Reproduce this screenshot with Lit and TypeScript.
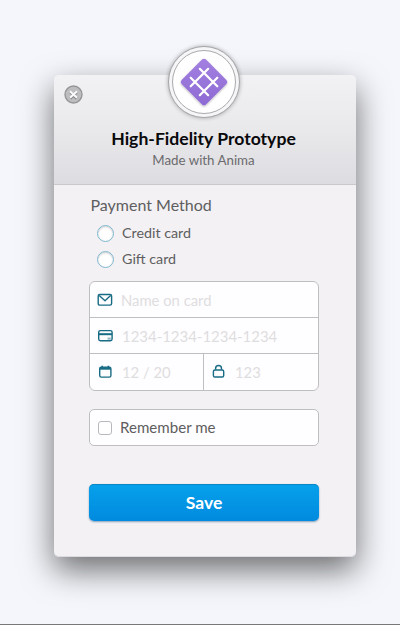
import { LitElement, html, css, svg } from 'lit';
import { customElement, property, state } from 'lit/decorators.js';
import { classMap } from 'lit/directives/class-map.js';

const icons = {
  mail: svg`
    <rect x="1.2" y="2.5" width="13.4" height="10.6" rx="1.6" />
    <path d="M2.2 3.5 8 8.7 13.6 3.5" />`,
  card: svg`
    <rect x="1.7" y="2.6" width="13.4" height="10.2" rx="1.7" />
    <path d="M1.7 6.2H15.1" stroke-width="2" />
    <path d="M10.5 10.6H13.8" stroke="#8fb4c0" stroke-width="2" />`,
  calendar: svg`
    <rect x="2.7" y="3.1" width="11.2" height="10" rx="1.6" />
    <path d="M2.8 4.4H13.8" stroke-width="2.6" />
    <path d="M5.2 1.7V4M11.4 1.7V4" stroke-width="1.6" />`,
  lock: svg`
    <rect x="2.4" y="6" width="10.3" height="7" rx="1.6" />
    <path d="M4.6 5.8V4.5a2.95 2.95 0 0 1 5.9 0V5.8" />`,
};

@customElement('field-icon')
export class FieldIcon extends LitElement {
  @property() name: keyof typeof icons = 'mail';

  static styles = css`
    :host {
      display: block;
      width: 16px;
      height: 16px;
      flex: none;
    }
    svg {
      display: block;
      fill: none;
      stroke: #176c84;
      stroke-width: 1.4;
      stroke-linejoin: round;
    }
  `;

  render() {
    return html`<svg width="16" height="16" viewBox="0 0 16 16">${icons[this.name]}</svg>`;
  }
}

@customElement('app-root')
export class AppRoot extends LitElement {
  @state() private method = '';
  @state() private remember = false;

  static styles = css`
    :host {
      display: flex;
      flex-direction: column;
      align-items: center;
      box-sizing: border-box;
      height: 625px;
      padding: 75px 0 0 10px;
      overflow: hidden;
      background: #f5f6fb;
      border-bottom: 1px solid #777;
      font-family: Lato, sans-serif;
      color: #5e5e60;
    }
    .card {
      display: flex;
      flex-direction: column;
      box-sizing: border-box;
      width: 302px;
      height: 482px;
      border-radius: 5px;
      background: #f3f1f4;
      box-shadow: 0 13px 32px rgba(0, 0, 0, 0.56), inset 0 -1px 0 #dcdbde;
    }
    .header {
      position: relative;
      box-sizing: border-box;
      height: 110px;
      padding: 53px 3px 0 0;
      border-radius: 5px 5px 0 0;
      border-bottom: 1px solid #c9c8cb;
      background: linear-gradient(#f2f1f4, #e9e8eb 50%, #dddce0);
      text-align: center;
    }
    .close {
      position: absolute;
      left: 10px;
      top: 10px;
      width: 19px;
      height: 19px;
      padding: 0;
      border: none;
      background: none;
    }
    .close svg,
    .logo svg {
      display: block;
    }
    .logo {
      position: absolute;
      left: 114px;
      top: -29px;
      box-sizing: border-box;
      width: 72px;
      height: 72px;
      padding: 3px;
      border: 1px solid #a5a5a8;
      border-radius: 50%;
      background: #f6f6f8;
      box-shadow: 0 0 4px rgba(0, 0, 0, 0.3);
    }
    .disc {
      display: flex;
      align-items: center;
      justify-content: center;
      box-sizing: border-box;
      width: 64px;
      height: 64px;
      border: 1px solid #aaaaad;
      border-radius: 50%;
      background: #fff;
    }
    .title {
      margin: 0;
      font-size: 17.6px;
      line-height: 22px;
      font-weight: 700;
      color: #09090b;
      white-space: nowrap;
    }
    .subtitle {
      font-size: 13.3px;
      line-height: 20px;
      color: #6b6b6e;
    }
    .body {
      display: flex;
      flex-direction: column;
      padding: 9px 37px 0 35px;
    }
    .heading {
      margin: 0 0 4px 1.5px;
      font-size: 16px;
      line-height: 22px;
      font-weight: 400;
    }
    .radio {
      display: flex;
      align-items: center;
      gap: 8px;
      height: 26px;
      padding-left: 8px;
      font-size: 14.3px;
      line-height: 19px;
    }
    .label {
      padding-bottom: 1px;
    }
    .ring {
      box-sizing: border-box;
      width: 17px;
      height: 17px;
      border: 1px solid #7fb6cf;
      border-radius: 50%;
      background: #fff;
      box-shadow: inset 0 1px 2px rgba(0, 0, 0, 0.2);
    }
    .ring.on {
      border-width: 5px;
    }
    .fields {
      display: grid;
      grid-template-columns: 114px 1fr;
      grid-template-rows: 36px 36px 36px;
      box-sizing: border-box;
      height: 110px;
      margin-top: 9px;
      border: 1px solid #bfbfc3;
      border-radius: 6px;
      background: #fefdff;
    }
    .field {
      display: flex;
      align-items: center;
      gap: 9px;
      box-sizing: border-box;
      min-width: 0;
      padding-left: 7px;
      border-bottom: 1px solid #bfbfc3;
    }
    .wide {
      grid-column: 1 / 3;
    }
    .name {
      gap: 8px;
    }
    .last {
      border-bottom: none;
    }
    .split {
      border-right: 1px solid #bfbfc3;
    }
    .code {
      gap: 8px;
    }
    input {
      flex: 1;
      min-width: 0;
      padding: 0;
      border: none;
      outline: none;
      background: none;
      font: 14.8px Lato, sans-serif;
      color: #58585a;
    }
    .number {
      font-size: 14.95px;
    }
    input::placeholder {
      color: #dedde0;
      opacity: 1;
    }
    .remember {
      display: flex;
      align-items: center;
      gap: 8px;
      box-sizing: border-box;
      height: 37px;
      margin-top: 18px;
      padding-left: 8px;
      border: 1px solid #bfbfc3;
      border-radius: 5px;
      background: #fefdff;
      font-size: 15.1px;
      line-height: 18px;
    }
    .box {
      box-sizing: border-box;
      width: 14px;
      height: 14px;
      border: 1px solid #b9b9bd;
      border-radius: 3px;
      background: #fff;
    }
    .box.on {
      background: #0b95e3;
    }
    .save {
      height: 37px;
      margin-top: 38px;
      padding: 0;
      border: none;
      border-radius: 5px;
      background: linear-gradient(#06a1eb, #018adf);
      box-shadow: inset 0 1px 0 #0c86c4, 0 1px 2px rgba(0, 60, 110, 0.45);
      font: 700 17.5px Lato, sans-serif;
      color: #fff;
    }
  `;

  private renderRadio(label: string) {
    return html`
      <div class="radio" @click=${() => (this.method = label)}>
        <span class=${classMap({ ring: true, on: this.method === label })}></span>
        <span class="label">${label}</span>
      </div>
    `;
  }

  render() {
    return html`
      <div class="card">
        <div class="header">
          <button class="close" aria-label="Close">
            <svg width="19" height="19" viewBox="0 0 19 19">
              <circle cx="9.5" cy="9.5" r="8.5" fill="#bdbdbf" stroke="#969698" stroke-width="1.4" />
              <path d="M6.2 7 12.8 13.4M12.8 7 6.2 13.4" stroke="#858587" stroke-width="3" />
              <path d="M6 6.2 13 12.8M13 6.2 6 12.8" stroke="#fafafa" stroke-width="2.2" />
            </svg>
          </button>
          <div class="logo">
            <div class="disc">
              <svg width="54" height="54" viewBox="-27 -27 54 54">
                <defs>
                  <linearGradient id="purple" x1="0" y1="0" x2="0" y2="1">
                    <stop offset="0" stop-color="#a27fe0" />
                    <stop offset="1" stop-color="#8e6bd3" />
                  </linearGradient>
                  <filter id="shade" x="-20%" y="-20%" width="140%" height="140%">
                    <feDropShadow dx="0" dy="1" stdDeviation="1.2" flood-opacity="0.3" />
                  </filter>
                </defs>
                <path
                  d="M-2-22.4Q0-24.2 2-22.4L22.4-2Q24.2 0 22.4 2L2 22.4Q0 24.2-2 22.4L-22.4 2Q-24.2 0-22.4-2Z"
                  fill="url(#purple)"
                  filter="url(#shade)"
                />
                <path
                  d="M4.2-13.2-13.3 4.3M13.3-4.3-4.2 13.2M-4.2-13.2 13.3 4.3M-13.3-4.3 4.2 13.2"
                  fill="none"
                  stroke="#fff"
                  stroke-width="2.2"
                  stroke-linecap="round"
                />
              </svg>
            </div>
          </div>
          <h1 class="title">High-Fidelity Prototype</h1>
          <div class="subtitle">Made with Anima</div>
        </div>
        <div class="body">
          <h2 class="heading">Payment Method</h2>
          ${this.renderRadio('Credit card')} ${this.renderRadio('Gift card')}
          <div class="fields">
            <label class="field wide name">
              <field-icon name="mail"></field-icon>
              <input placeholder="Name on card" />
            </label>
            <label class="field wide">
              <field-icon name="card"></field-icon>
              <input class="number" placeholder="1234-1234-1234-1234" />
            </label>
            <label class="field last split">
              <field-icon name="calendar"></field-icon>
              <input placeholder="12 / 20" />
            </label>
            <label class="field last code">
              <field-icon name="lock"></field-icon>
              <input placeholder="123" />
            </label>
          </div>
          <div class="remember" @click=${() => (this.remember = !this.remember)}>
            <span class=${classMap({ box: true, on: this.remember })}></span>
            <span class="label">Remember me</span>
          </div>
          <button class="save">Save</button>
        </div>
      </div>
    `;
  }
}
